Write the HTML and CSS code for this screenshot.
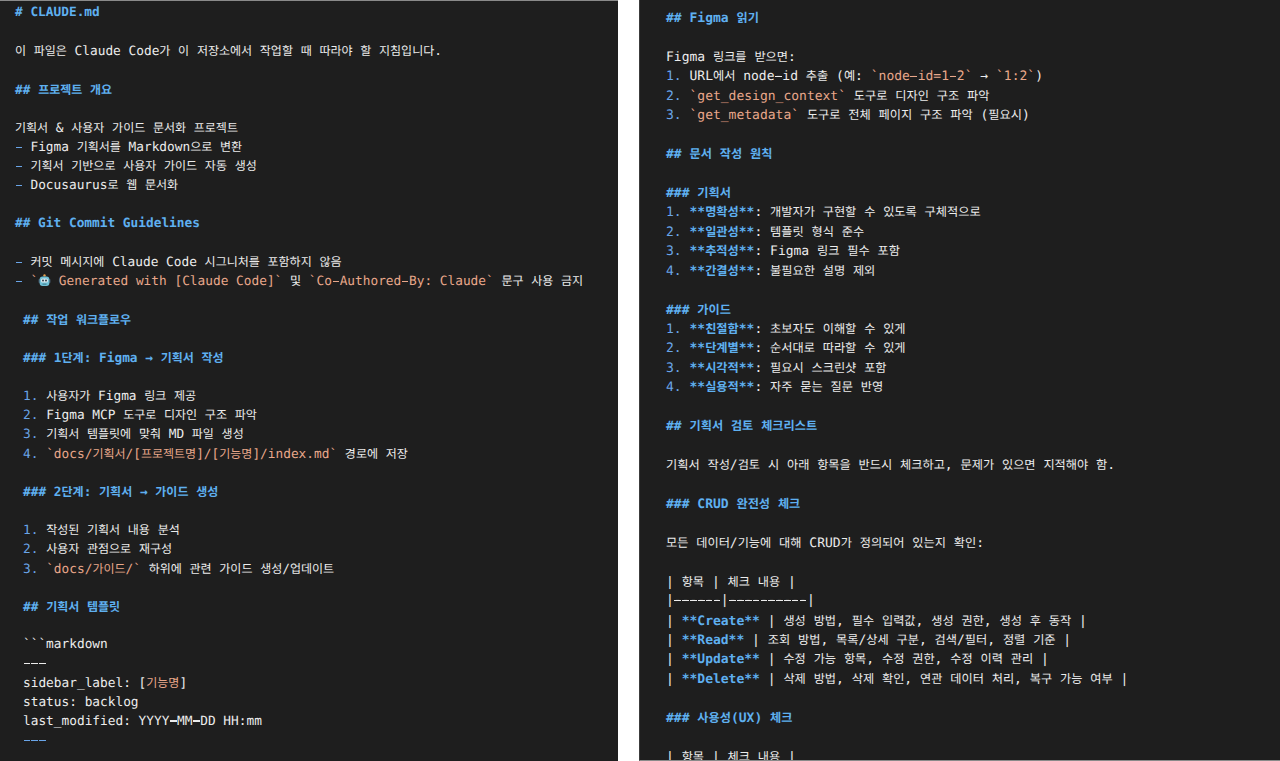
FILE: index.html
```html
<!DOCTYPE html>
<html lang="ko">
<head>
<meta charset="utf-8">
<title>CLAUDE.md</title>
<link rel="stylesheet" href="styles.css">
</head>
<body>
<main class="page">
<section class="panel left">
<div class="ln h"># CLAUDE.md</div>
<div class="ln">&nbsp;</div>
<div class="ln"><span class="k">이</span> <span class="k">파일은</span> Claude Code<span class="k">가</span> <span class="k">이</span> <span class="k">저장소에서</span> <span class="k">작업할</span> <span class="k">때</span> <span class="k">따라야</span> <span class="k">할</span> <span class="k">지침입니다</span>.</div>
<div class="ln">&nbsp;</div>
<div class="ln h">## <span class="k">프로젝트</span> <span class="k">개요</span></div>
<div class="ln">&nbsp;</div>
<div class="ln"><span class="k">기획서</span> &amp; <span class="k">사용자</span> <span class="k">가이드</span> <span class="k">문서화</span> <span class="k">프로젝트</span></div>
<div class="ln"><span class="m d">-</span> Figma <span class="k">기획서를</span> Markdown<span class="k">으로</span> <span class="k">변환</span></div>
<div class="ln"><span class="m d">-</span> <span class="k">기획서</span> <span class="k">기반으로</span> <span class="k">사용자</span> <span class="k">가이드</span> <span class="k">자동</span> <span class="k">생성</span></div>
<div class="ln"><span class="m d">-</span> Docusaurus<span class="k">로</span> <span class="k">웹</span> <span class="k">문서화</span></div>
<div class="ln">&nbsp;</div>
<div class="ln h">## Git Commit Guidelines</div>
<div class="ln">&nbsp;</div>
<div class="ln"><span class="m d">-</span> <span class="k">커밋</span> <span class="k">메시지에</span> Claude Code <span class="k">시그니처를</span> <span class="k">포함하지</span> <span class="k">않음</span></div>
<div class="ln"><span class="m d">-</span> <span class="c">`<svg class="robot" viewBox="0 0 13 13" aria-hidden="true"><circle cx="6.5" cy="1.4" r="1.2" fill="#e8a04c"/><rect x="0.4" y="5" width="2" height="4" rx="1" fill="#3b4a5a"/><rect x="10.6" y="5" width="2" height="4" rx="1" fill="#3b4a5a"/><rect x="1.6" y="2.6" width="9.8" height="9.4" rx="3" fill="#6fc0d6"/><rect x="3" y="4.4" width="7" height="4.2" rx="1.6" fill="#d8e8ee"/><circle cx="5" cy="6.5" r="0.9" fill="#24323e"/><circle cx="8" cy="6.5" r="0.9" fill="#24323e"/><rect x="4.5" y="9.6" width="4" height="1.1" fill="#3f7f92"/></svg> Generated with [Claude Code]`</span> <span class="k">및</span> <span class="c">`Co<span class="d">-</span>Authored<span class="d">-</span>By: Claude`</span> <span class="k">문구</span> <span class="k">사용</span> <span class="k">금지</span></div>
<div class="ln">&nbsp;</div>
<div class="ind">
<div class="ln h">## <span class="k">작업</span> <span class="k">워크플로우</span></div>
<div class="ln">&nbsp;</div>
<div class="ln h">### 1<span class="k">단계</span>: Figma → <span class="k">기획서</span> <span class="k">작성</span></div>
<div class="ln">&nbsp;</div>
<div class="ln"><span class="m">1.</span> <span class="k">사용자가</span> Figma <span class="k">링크</span> <span class="k">제공</span></div>
<div class="ln"><span class="m">2.</span> Figma MCP <span class="k">도구로</span> <span class="k">디자인</span> <span class="k">구조</span> <span class="k">파악</span></div>
<div class="ln"><span class="m">3.</span> <span class="k">기획서</span> <span class="k">템플릿에</span> <span class="k">맞춰</span> MD <span class="k">파일</span> <span class="k">생성</span></div>
<div class="ln"><span class="m">4.</span> <span class="c">`docs/<span class="k">기획서</span>/[<span class="k">프로젝트명</span>]/[<span class="k">기능명</span>]/index.md`</span> <span class="k">경로에</span> <span class="k">저장</span></div>
<div class="ln">&nbsp;</div>
<div class="ln h">### 2<span class="k">단계</span>: <span class="k">기획서</span> → <span class="k">가이드</span> <span class="k">생성</span></div>
<div class="ln">&nbsp;</div>
<div class="ln"><span class="m">1.</span> <span class="k">작성된</span> <span class="k">기획서</span> <span class="k">내용</span> <span class="k">분석</span></div>
<div class="ln"><span class="m">2.</span> <span class="k">사용자</span> <span class="k">관점으로</span> <span class="k">재구성</span></div>
<div class="ln"><span class="m">3.</span> <span class="c">`docs/<span class="k">가이드</span>/`</span> <span class="k">하위에</span> <span class="k">관련</span> <span class="k">가이드</span> <span class="k">생성</span>/<span class="k">업데이트</span></div>
<div class="ln">&nbsp;</div>
<div class="ln h">## <span class="k">기획서</span> <span class="k">템플릿</span></div>
<div class="ln">&nbsp;</div>
<div class="ln">```markdown</div>
<div class="ln"><span class="d">-</span><span class="d">-</span><span class="d">-</span></div>
<div class="ln">sidebar_label: [<span class="k c">기능명</span>]</div>
<div class="ln">status: backlog</div>
<div class="ln">last_modified: YYYY<span class="d">-</span>MM<span class="d">-</span>DD HH:mm</div>
<div class="ln m"><span class="d">-</span><span class="d">-</span><span class="d">-</span></div>
</div>
</section>
<section class="panel right">
<div class="ln h">## Figma <span class="k">읽기</span></div>
<div class="ln">&nbsp;</div>
<div class="ln">Figma <span class="k">링크를</span> <span class="k">받으면</span>:</div>
<div class="ln"><span class="m">1.</span> URL<span class="k">에서</span> node<span class="d">-</span>id <span class="k">추출</span> (<span class="k">예</span>: <span class="c">`node<span class="d">-</span>id=1<span class="d">-</span>2`</span> → <span class="c">`1:2`</span>)</div>
<div class="ln"><span class="m">2.</span> <span class="c">`get_design_context`</span> <span class="k">도구로</span> <span class="k">디자인</span> <span class="k">구조</span> <span class="k">파악</span></div>
<div class="ln"><span class="m">3.</span> <span class="c">`get_metadata`</span> <span class="k">도구로</span> <span class="k">전체</span> <span class="k">페이지</span> <span class="k">구조</span> <span class="k">파악</span> (<span class="k">필요시</span>)</div>
<div class="ln">&nbsp;</div>
<div class="ln h">## <span class="k">문서</span> <span class="k">작성</span> <span class="k">원칙</span></div>
<div class="ln">&nbsp;</div>
<div class="ln h">### <span class="k">기획서</span></div>
<div class="ln"><span class="m">1.</span> <span class="b">**<span class="k">명확성</span>**</span>: <span class="k">개발자가</span> <span class="k">구현할</span> <span class="k">수</span> <span class="k">있도록</span> <span class="k">구체적으로</span></div>
<div class="ln"><span class="m">2.</span> <span class="b">**<span class="k">일관성</span>**</span>: <span class="k">템플릿</span> <span class="k">형식</span> <span class="k">준수</span></div>
<div class="ln"><span class="m">3.</span> <span class="b">**<span class="k">추적성</span>**</span>: Figma <span class="k">링크</span> <span class="k">필수</span> <span class="k">포함</span></div>
<div class="ln"><span class="m">4.</span> <span class="b">**<span class="k">간결성</span>**</span>: <span class="k">불필요한</span> <span class="k">설명</span> <span class="k">제외</span></div>
<div class="ln">&nbsp;</div>
<div class="ln h">### <span class="k">가이드</span></div>
<div class="ln"><span class="m">1.</span> <span class="b">**<span class="k">친절함</span>**</span>: <span class="k">초보자도</span> <span class="k">이해할</span> <span class="k">수</span> <span class="k">있게</span></div>
<div class="ln"><span class="m">2.</span> <span class="b">**<span class="k">단계별</span>**</span>: <span class="k">순서대로</span> <span class="k">따라할</span> <span class="k">수</span> <span class="k">있게</span></div>
<div class="ln"><span class="m">3.</span> <span class="b">**<span class="k">시각적</span>**</span>: <span class="k">필요시</span> <span class="k">스크린샷</span> <span class="k">포함</span></div>
<div class="ln"><span class="m">4.</span> <span class="b">**<span class="k">실용적</span>**</span>: <span class="k">자주</span> <span class="k">묻는</span> <span class="k">질문</span> <span class="k">반영</span></div>
<div class="ln">&nbsp;</div>
<div class="ln h">## <span class="k">기획서</span> <span class="k">검토</span> <span class="k">체크리스트</span></div>
<div class="ln">&nbsp;</div>
<div class="ln"><span class="k">기획서</span> <span class="k">작성</span>/<span class="k">검토</span> <span class="k">시</span> <span class="k">아래</span> <span class="k">항목을</span> <span class="k">반드시</span> <span class="k">체크하고</span>, <span class="k">문제가</span> <span class="k">있으면</span> <span class="k">지적해야</span> <span class="k">함</span>.</div>
<div class="ln">&nbsp;</div>
<div class="ln h">### CRUD <span class="k">완전성</span> <span class="k">체크</span></div>
<div class="ln">&nbsp;</div>
<div class="ln"><span class="k">모든</span> <span class="k">데이터</span>/<span class="k">기능에</span> <span class="k">대해</span> CRUD<span class="k">가</span> <span class="k">정의되어</span> <span class="k">있는지</span> <span class="k">확인</span>:</div>
<div class="ln">&nbsp;</div>
<div class="ln">| <span class="k">항목</span> | <span class="k">체크</span> <span class="k">내용</span> |</div>
<div class="ln">|<span class="d">-</span><span class="d">-</span><span class="d">-</span><span class="d">-</span><span class="d">-</span><span class="d">-</span>|<span class="d">-</span><span class="d">-</span><span class="d">-</span><span class="d">-</span><span class="d">-</span><span class="d">-</span><span class="d">-</span><span class="d">-</span><span class="d">-</span><span class="d">-</span>|</div>
<div class="ln">| <span class="b">**Create**</span> | <span class="k">생성</span> <span class="k">방법</span>, <span class="k">필수</span> <span class="k">입력값</span>, <span class="k">생성</span> <span class="k">권한</span>, <span class="k">생성</span> <span class="k">후</span> <span class="k">동작</span> |</div>
<div class="ln">| <span class="b">**Read**</span> | <span class="k">조회</span> <span class="k">방법</span>, <span class="k">목록</span>/<span class="k">상세</span> <span class="k">구분</span>, <span class="k">검색</span>/<span class="k">필터</span>, <span class="k">정렬</span> <span class="k">기준</span> |</div>
<div class="ln">| <span class="b">**Update**</span> | <span class="k">수정</span> <span class="k">가능</span> <span class="k">항목</span>, <span class="k">수정</span> <span class="k">권한</span>, <span class="k">수정</span> <span class="k">이력</span> <span class="k">관리</span> |</div>
<div class="ln">| <span class="b">**Delete**</span> | <span class="k">삭제</span> <span class="k">방법</span>, <span class="k">삭제</span> <span class="k">확인</span>, <span class="k">연관</span> <span class="k">데이터</span> <span class="k">처리</span>, <span class="k">복구</span> <span class="k">가능</span> <span class="k">여부</span> |</div>
<div class="ln">&nbsp;</div>
<div class="ln h">### <span class="k">사용성</span>(UX) <span class="k">체크</span></div>
<div class="ln">&nbsp;</div>
<div class="ln">| <span class="k">항목</span> | <span class="k">체크</span> <span class="k">내용</span> |</div>
</section>
</main>
</body>
</html>
```
FILE: styles.css
```css
html, body {
  margin: 0;
  height: 100%;
  background: #fff;
}
.page {
  display: flex;
  justify-content: space-between;
  height: 761px;
  overflow: hidden;
}
.panel {
  background: #1e1e1e;
  color: #ececec;
  font-family: "DejaVu Sans Mono", "Noto Sans CJK KR", monospace;
  overflow: hidden;
  box-sizing: border-box;
  text-rendering: geometricPrecision;
}
.left {
  width: 618px;
  padding: 2px 0 0 15px;
  border-top: 1px solid #8a8a8a;
  font-size: 12.8px;
  --lh: 19.16px;
  --kr: 12px;
}
.right {
  width: 641px;
  padding: 8px 0 0 26px;
  border-bottom: 1px solid #8a8a8a;
  border-left: 1px solid #3c3c3c;
  font-size: 13px;
  --lh: 19.44px;
  --kr: 12.18px;
}
.ind { padding-left: 8px; }
.ln { white-space: pre; height: var(--lh); line-height: var(--lh); }
.k { font-family: "Noto Sans CJK KR", sans-serif; font-size: var(--kr); }
.d { position: relative; }
.d::after {
  content: "";
  position: absolute;
  left: 0.6px;
  right: 0.6px;
  top: 44%;
  height: 1.2px;
  background: currentColor;
}
.h { color: #5fb0f0; font-weight: 700; }
.b { color: #5fb0f0; font-weight: 700; }
.m { color: #6aa5e8; }
.c { color: #e8a78a; }
.robot { width: 13px; height: 13px; vertical-align: -2px; }
```
